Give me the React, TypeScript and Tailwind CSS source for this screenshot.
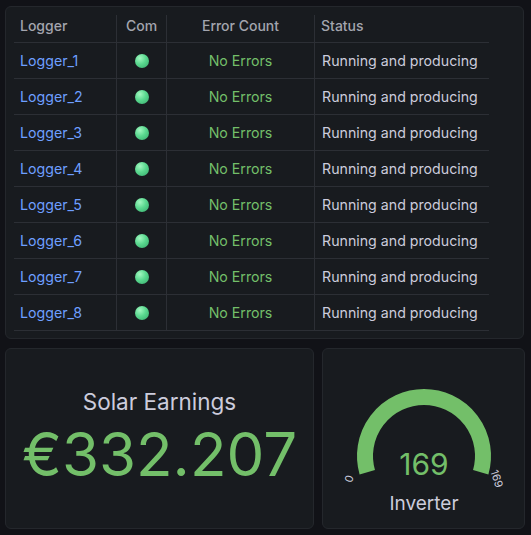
import * as React from 'react';

const loggers = Array.from({ length: 8 }, (_, i) => `Logger_${i + 1}`);

/** Green status LED */
const Dot: React.FC = () => (
  <span className="block h-[14px] w-[14px] rounded-full bg-[radial-gradient(circle_at_35%_30%,#a2f7c0_0%,#5ad88f_45%,#35a86a_100%)]" />
);

const LoggerTable: React.FC = () => {
  const cols = 'grid grid-cols-[103px_50px_148px_174px]';
  return (
    <div className="w-[475px]">
      {/* Header */}
      <div className={`${cols} h-[28px] border-b border-[#2c2f35] text-[14px] font-medium text-[#a3a5ae]`}>
        <div className="flex items-start border-r border-[#2c2f35] px-[6px]">Logger</div>
        <div className="flex justify-center border-r border-[#2c2f35]">Com</div>
        <div className="flex justify-center border-r border-[#2c2f35]">Error Count</div>
        <div className="px-[6px]">Status</div>
      </div>
      {loggers.map((name) => (
        <div key={name} className={`${cols} h-[36px] border-b border-[#2c2f35] text-[14.2px]`}>
          <div className="flex items-center border-r border-[#2c2f35] px-[6px] text-[#6e9fff]">{name}</div>
          <div className="flex items-center justify-center border-r border-[#2c2f35]">
            <Dot />
          </div>
          <div className="flex items-center justify-center border-r border-[#2c2f35] text-[#73bf69]">No Errors</div>
          <div className="flex items-center px-[7px] text-[#ccccdc]">Running and producing</div>
        </div>
      ))}
    </div>
  );
};

/** Half-ring gauge, drawn in panel coordinates */
const Gauge: React.FC<{ value: number; max: number; label: string }> = ({ value, max, label }) => {
  const cx = 101;
  const cy = 107;
  const r = 59;
  const a = (16 * Math.PI) / 180;
  const x1 = cx - r * Math.cos(a);
  const y1 = cy + r * Math.sin(a);
  const x2 = cx + r * Math.cos(a);
  return (
    <svg width="201" height="179" viewBox="0 0 201 179" className="block">
      <path
        d={`M ${x1} ${y1} A ${r} ${r} 0 1 1 ${x2} ${y1}`}
        fill="none"
        stroke="#73bf69"
        strokeWidth={16}
      />
      <text
        x={cx}
        y={126}
        textAnchor="middle"
        fontSize="30"
        fill="#73bf69"
        fontFamily="Inter, sans-serif"
      >
        {value}
      </text>
      <text
        x={cx}
        y={161}
        textAnchor="middle"
        fontSize="19"
        fill="#ccccdc"
        fontFamily="Inter, sans-serif"
      >
        {label}
      </text>
      <text
        x={27}
        y={130}
        textAnchor="middle"
        dominantBaseline="middle"
        fontSize="11"
        fill="#ccccdc"
        fontFamily="Inter, sans-serif"
        transform="rotate(-72 27 130)"
      >
        0
      </text>
      <text
        x={173}
        y={130}
        textAnchor="middle"
        dominantBaseline="middle"
        fontSize="11"
        fill="#ccccdc"
        fontFamily="Inter, sans-serif"
        transform="rotate(72 173 130)"
      >
        {max}
      </text>
    </svg>
  );
};

export default function App() {
  return (
    <div className="h-[535px] w-[531px] bg-[#111217] pl-[5px] pt-[6px] font-['Inter',sans-serif]">
      <div className="h-[333px] w-[519px] rounded-[6px] border border-[#24272c] bg-[#181b1f] p-[8px]">
        <LoggerTable />
      </div>
      <div className="mt-[9px] flex gap-[8px]">
        <div className="flex h-[181px] w-[309px] flex-col items-center justify-center rounded-[6px] border border-[#24272c] bg-[#181b1f] pb-[4px]">
          <div className="text-[22.5px] leading-[26px] text-[#ccccdc]">Solar Earnings</div>
          <div className="mt-[8px] text-[60px] leading-[62px] text-[#73bf69]">€332.207</div>
        </div>
        <div className="h-[181px] w-[203px] rounded-[6px] border border-[#24272c] bg-[#181b1f]">
          <Gauge value={169} max={169} label="Inverter" />
        </div>
      </div>
    </div>
  );
}
